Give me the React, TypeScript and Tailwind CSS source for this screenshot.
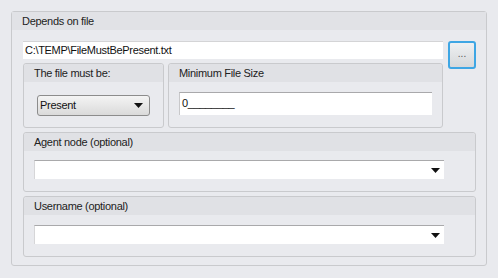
import React from "react";

const font = { fontFamily: '"Liberation Sans", Arial, sans-serif' };

function Arrow() {
  return (
    <svg width="9" height="5" viewBox="0 0 9 5" className="shrink-0">
      <path d="M0 0H9L4.5 5Z" fill="#111" />
    </svg>
  );
}

function Group({
  title,
  className,
  children,
}: {
  title: string;
  className?: string;
  children: React.ReactNode;
}) {
  return (
    <div className={`flex flex-col rounded-[3px] border border-[#c9cacd] bg-[#e9eaee] ${className ?? ""}`}>
      <div className="h-[18px] shrink-0 rounded-t-[3px] bg-[#e0e1e5] pl-[10px] text-[11px] leading-[18px] tracking-[-0.3px] text-[#222]">
        {title}
      </div>
      {children}
    </div>
  );
}

function ComboInput() {
  return (
    <div className="flex h-[19px] w-[410px] items-center justify-end border-t border-t-[#a9a9ab] border-l border-l-[#d6d6d8] bg-white pr-[4px]">
      <Arrow />
    </div>
  );
}

export default function App() {
  return (
    <div className="h-[278px] w-[498px] bg-[#e9eaee] pt-[11px] pl-[11px]" style={font}>
      <div className="flex h-[255px] w-[476px] flex-col rounded-[3px] border border-[#c9cacd] bg-[#e9eaee]">
        <div className="h-[18px] shrink-0 bg-[#e1e2e6] pl-[10px] text-[11px] leading-[18px] tracking-[-0.3px] text-[#222]">
          Depends on file
        </div>
        <div className="flex flex-col gap-[4px] pt-[11px] pl-[11px]">
          <div className="flex gap-[5px]">
            <div className="flex w-[420px] flex-col gap-[4px]">
              <div className="h-[18px] border-t border-t-[#d4d4d6] bg-white pl-[2px] text-[11px] leading-[17px] tracking-[-0.3px] text-[#111]">
                C:\TEMP\FileMustBePresent.txt
              </div>
              <div className="flex gap-[4px]">
                <Group title="The file must be:" className="h-[65px] w-[141px]">
                  <div className="pt-[13px] pl-[13px]">
                    <div className="flex h-[21px] w-[113px] items-center justify-between rounded-[3px] border border-[#8c8c8c] bg-gradient-to-b from-[#f4f4f4] to-[#dadada] pr-[6px] pl-[2px] text-[11px] tracking-[-0.3px] text-[#111]">
                      <span>Present</span>
                      <Arrow />
                    </div>
                  </div>
                </Group>
                <Group title="Minimum File Size" className="h-[65px] flex-1">
                  <div className="pt-[10px] pl-[10px] pr-[10px]">
                    <div className="h-[23px] border-t border-t-[#a9a9ab] border-l border-l-[#c8c8ca] bg-white pl-[2px] text-[11px] leading-[20px] tracking-[-0.3px] text-[#111]">
                      0________
                    </div>
                  </div>
                </Group>
              </div>
            </div>
            <div className="flex h-[28px] w-[28px] items-center justify-center rounded-[3px] border-2 border-[#3ea6e4] bg-gradient-to-b from-[#eef0f2] to-[#d6d8da] pb-[3px] text-[10px] leading-none text-[#555]">
              ...
            </div>
          </div>
          <Group title="Agent node (optional)" className="h-[60px] w-[453px]">
            <div className="pt-[9px] pl-[10px]">
              <ComboInput />
            </div>
          </Group>
          <Group title="Username (optional)" className="h-[61px] w-[453px]">
            <div className="pt-[10px] pl-[10px]">
              <ComboInput />
            </div>
          </Group>
        </div>
      </div>
    </div>
  );
}
